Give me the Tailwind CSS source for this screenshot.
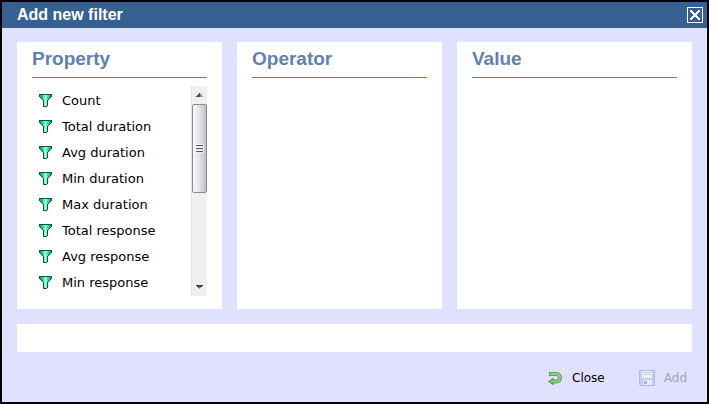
<!DOCTYPE html>
<html lang="en">
<head>
    <meta charset="UTF-8">
    <meta name="viewport" content="width=device-width, initial-scale=1.0">
    <title>Add new filter</title>
    <script src="https://cdn.jsdelivr.net/npm/@tailwindcss/browser@4"></script>
</head>
<body class="bg-[#e0e0ff] text-black font-['DejaVu_Sans',sans-serif]">

    <div role="dialog" aria-labelledby="dialog-title" class="flex min-h-screen flex-col border-2 border-black bg-[#e0e0ff]">
        <header class="flex h-[26px] items-center justify-between bg-[#366092] pl-[15px] pr-1">
            <h1 id="dialog-title" class="font-['Liberation_Sans',Arial,sans-serif] text-base leading-6 font-bold text-white">Add new filter</h1>
            <button type="button" aria-label="Close dialog" class="size-4">
                <svg class="size-4" viewBox="0 0 16 16" fill="none" shape-rendering="crispEdges">
                    <rect x="0.5" y="0.5" width="15" height="15" stroke="#fff"/>
                    <path fill="#fff" d="M3 3h2v1h1v1h1v1h2V5h1V4h1V3h2v2h-1v1h-1v1h-1v2h1v1h1v1h1v2h-2v-1h-1v-1H9v-1H7v1H6v1H5v1H3v-2h1v-1h1V9h1V7H5V6H4V5H3z"/>
                </svg>
            </button>
        </header>

        <main class="flex flex-col gap-[15px] px-[15px] pt-[14px]">
            <div class="grid grid-cols-[205fr_205fr_235fr] gap-[15px]">
                <section class="h-[267px] bg-white px-[15px]">
                    <h2 class="h-9 border-b border-[#5f81ae] pt-[5px] font-['Liberation_Sans',Arial,sans-serif] text-[19px] leading-6 font-bold text-[#5f81ae]">Property</h2>
                    <div class="mt-2 flex h-[210px]">
                        <ul id="property-list" class="flex-1 overflow-hidden pt-px text-[13px] leading-6"></ul>
                        <div class="flex w-4 flex-col items-center border-l border-[#e3e3e3] bg-[#f0f0f0]">
                            <button type="button" aria-label="Scroll up" class="flex h-[18px] w-full items-center justify-center">
                                <svg width="7" height="4" viewBox="0 0 7 4" shape-rendering="crispEdges">
                                    <path fill="#505050" d="M3 0h1v1h1v1h1v1h1v1H0V3h1V2h1V1h1z"/>
                                    <path fill="#999" d="M4 2h2v1h1v1H4z"/>
                                </svg>
                            </button>
                            <div class="flex h-[89px] w-full items-center justify-center rounded-xs border border-[#8b8b8b] bg-linear-to-r from-[#f7f7f8] via-[#e2e3e6] to-[#c0c1c6]">
                                <svg width="9" height="9" viewBox="0 0 9 9" shape-rendering="crispEdges">
                                    <path fill="#fff" d="M0 0h9v9H0z" opacity=".5"/>
                                    <path fill="#555" d="M1 1h7v1H1zM1 4h7v1H1zM1 7h7v1H1z"/>
                                </svg>
                            </div>
                            <button type="button" aria-label="Scroll down" class="mt-auto flex h-[18px] w-full items-center justify-center">
                                <svg width="7" height="4" viewBox="0 0 7 4" shape-rendering="crispEdges">
                                    <path fill="#404040" d="M0 0h7v1H6v1H5v1H4v1H3V3H2V2H1V1H0z"/>
                                    <path fill="#999" d="M3 2h2v1H4v1H3z"/>
                                </svg>
                            </button>
                        </div>
                    </div>
                </section>

                <section class="h-[267px] bg-white px-[15px]">
                    <h2 class="h-9 border-b border-[#5f81ae] pt-[5px] font-['Liberation_Sans',Arial,sans-serif] text-[19px] leading-6 font-bold text-[#5f81ae]">Operator</h2>
                </section>

                <section class="h-[267px] bg-white px-[15px]">
                    <h2 class="h-9 border-b border-[#5f81ae] pt-[5px] font-['Liberation_Sans',Arial,sans-serif] text-[19px] leading-6 font-bold text-[#5f81ae]">Value</h2>
                </section>
            </div>

            <div id="filter-summary" class="h-7 bg-white"></div>
        </main>

        <footer class="flex justify-end gap-[34px] pt-[17px] pr-5 text-xs leading-[18px]">
            <button type="button" class="flex items-center gap-[9px]">
                <svg class="size-4" viewBox="0 0 16 16">
                    <path d="M2 4h7.500a3.500 3.750 0 0 1 0 7.500H5" fill="none" stroke="#5c9f55" stroke-width="4"/>
                    <path d="M6.500 7.500v8L1 11.500z" fill="#4c9345"/>
                    <path d="M3 4h6.500a3.500 3.750 0 0 1 0 7.500H5" fill="none" stroke="#93d088" stroke-width="2"/>
                    <path d="M5.500 9.500v4L2.500 11.500z" fill="#83c979"/>
                </svg>
                Close
            </button>
            <button type="button" disabled class="flex items-center gap-[9px] text-[#a3a3bd]">
                <svg class="size-4" viewBox="0 0 16 16">
                    <path d="M.5.5h15v15h-14l-1-1z" fill="#bfcef2" stroke="#a9bbe6"/>
                    <path d="M3 1h10v7H3z" fill="#edf2fa"/>
                    <path d="M4 2h8v1H4zM4 4h8v1H4z" fill="#bcd9be"/>
                    <path d="M4 10h9v5H4z" fill="#e6ebf7"/>
                    <path d="M5 11h3v3H5z" fill="#a3b5e2"/>
                </svg>
                Add
            </button>
        </footer>
    </div>

    <!-- shared fill for the funnel icons -->
    <svg class="absolute size-0" aria-hidden="true">
        <linearGradient id="funnel-fill" gradientUnits="userSpaceOnUse" x1="1" y1="0" x2="12" y2="0">
            <stop offset="0" stop-color="#0aa56c"/>
            <stop offset=".25" stop-color="#14d68e"/>
            <stop offset=".5" stop-color="#b8fbe0"/>
            <stop offset=".7" stop-color="#3fdca5"/>
            <stop offset="1" stop-color="#0b9c68"/>
        </linearGradient>
    </svg>

    <script>
        const properties = [
            'Count', 'Total duration', 'Avg duration', 'Min duration',
            'Max duration', 'Total response', 'Avg response', 'Min response'
        ];

        const funnel = `
            <svg width="13" height="13" viewBox="0 0 13 13" shape-rendering="crispEdges">
                <path fill="#0b5b3c" d="M0 0h13v3h-1v1h-1v1h-1v1H9v6H8v1H4V6H3V5H2V4H1V3H0z"/>
                <path fill="url(#funnel-fill)" d="M1 1h11v2h-1v1h-1v1H9v1H8v6H5V6H4V5H3V4H2V3H1z"/>
            </svg>`;

        const list = document.getElementById('property-list');
        properties.forEach(name => {
            list.innerHTML += `<li><button type="button" class="flex h-[26px] w-full items-center gap-[10px] pl-[7px] text-left">${funnel}<span class="pt-0.5">${name}</span></button></li>`;
        });
    </script>
</body>
</html>
